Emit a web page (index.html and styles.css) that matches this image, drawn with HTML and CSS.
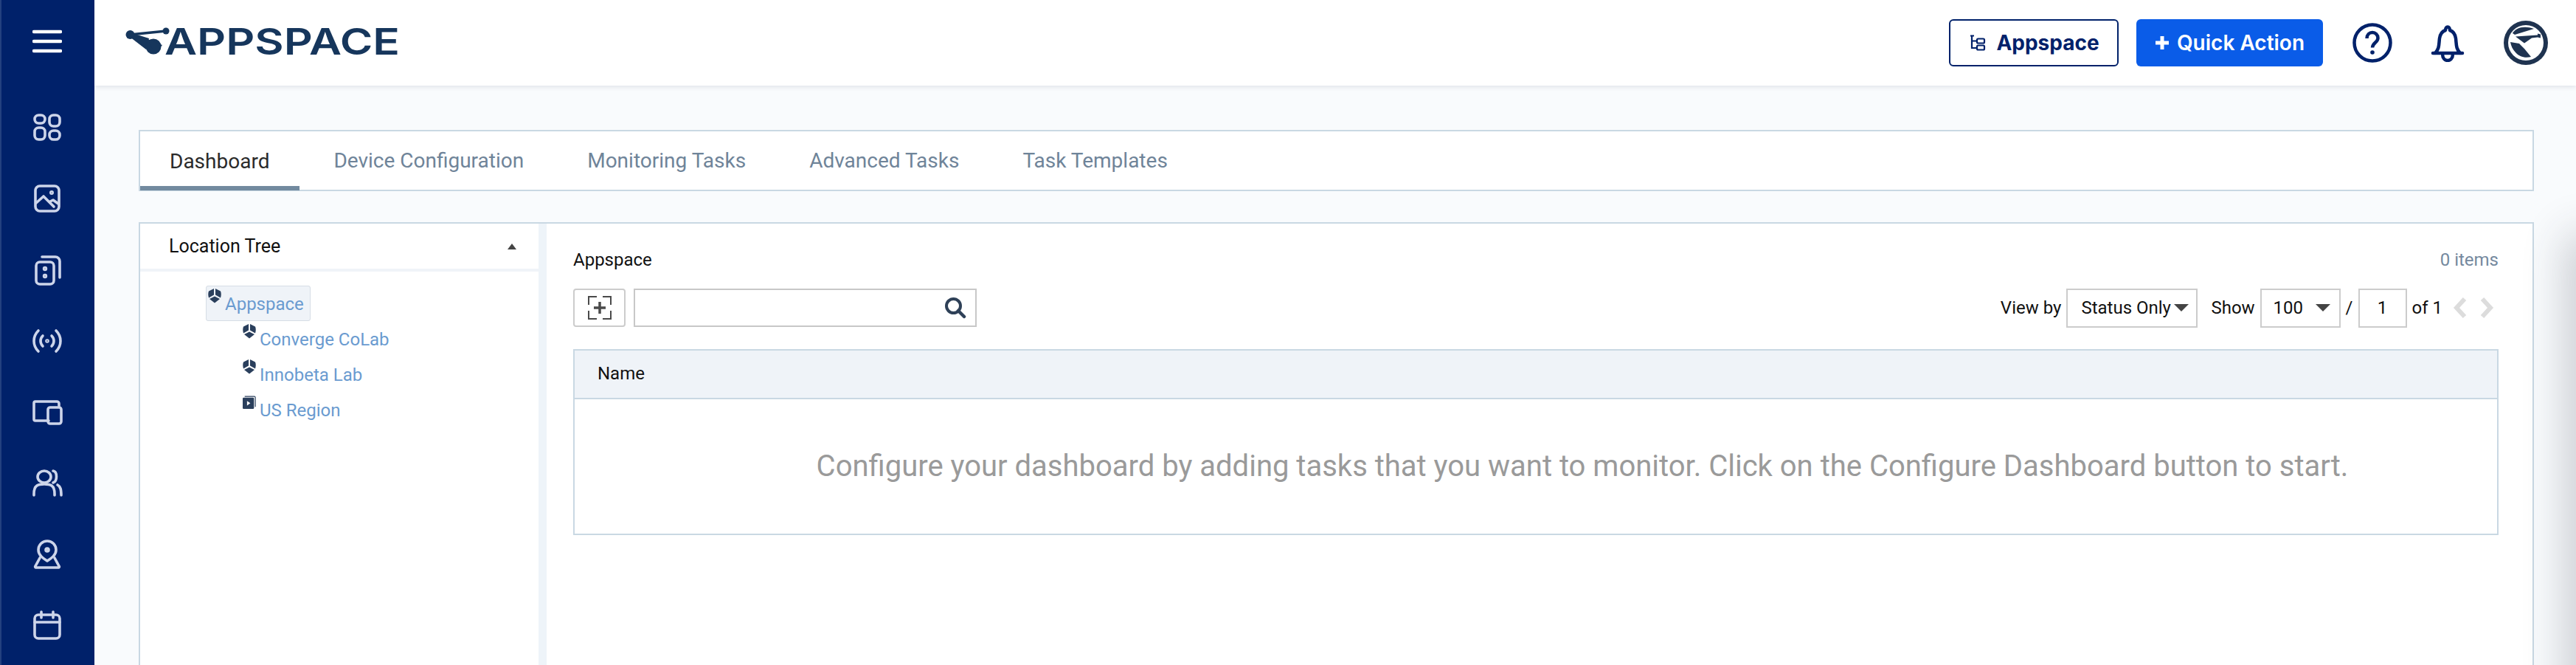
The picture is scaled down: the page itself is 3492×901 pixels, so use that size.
FILE: index.html
```html
<!DOCTYPE html>
<html>
<head>
<meta http-equiv="Content-Type" content="text/html; charset=utf-8">
<title>Appspace</title>
<link rel="stylesheet" href="styles.css">
</head>
<body>
<div class="app">
    <nav class="side">
        <a class="side_burger" href="javascript:;">
            <svg width="40" height="32" viewBox="0 0 40 32"><path d="M2 3h36M2 16h36M2 29h36" stroke="#fff" stroke-width="4.5" stroke-linecap="round"/></svg>
        </a>
        <ul class="side_menu">
            <li><svg viewBox="0 0 24 24"><rect x="3.5" y="3.5" width="7" height="5.5" rx="2.7"/><rect x="13.500" y="3.500" width="7" height="7.500" rx="2.700"/><rect x="3.500" y="12" width="7" height="8" rx="2.700"/><rect x="13.500" y="14" width="7" height="6" rx="2.800"/></svg></li>
            <li><svg viewBox="0 0 24 24"><rect x="4" y="3.500" width="16" height="17" rx="3"/><circle cx="15" cy="8" r=".6"/><path d="M4.500 15l5-4.500 5 5 2 2M14 14l2-1 3.500 2.500"/></svg></li>
            <li><svg viewBox="0 0 24 24"><rect x="4.500" y="6.500" width="12" height="15" rx="2.500"/><path d="M8.500 3h9a3 3 0 0 1 3 3v11"/><circle cx="10.500" cy="11" r=".7"/><circle cx="10.500" cy="16" r=".7"/></svg></li>
            <li><svg viewBox="0 0 24 24"><path d="M6 5c-4 4-4 10 0 14M18 5c4 4 4 10 0 14M9 8.500c-2 2-2 5 0 7M15 8.500c2 2 2 5 0 7"/><circle cx="12" cy="12" r=".5"/></svg></li>
            <li><svg viewBox="0 0 24 24"><path d="M13 18H4a1 1 0 0 1-1-1V6a1 1 0 0 1 1-1h14.500a1.500 1.500 0 0 1 1.500 1.500V8"/><rect x="12.500" y="9" width="9" height="11" rx="1.500"/></svg></li>
            <li><svg viewBox="0 0 24 24"><ellipse cx="10" cy="7.500" rx="4.500" ry="4"/><path d="M3 20v-1c0-6 3-6.500 7-6.500s7 .5 7 6.500v1M16 3.500c3 .5 3 7 0 8M19 13c2 1 2.500 3 2.500 7"/></svg></li>
            <li><svg viewBox="0 0 24 24"><path d="M12 16.500c-3-2-6-4-6-7.500a6 6 0 0 1 12 0c0 3.500-3 5.500-6 7.500z"/><circle cx="12" cy="9" r="1"/><path d="M7 14.500l-3 5.500a.6.6 0 0 0 .5 1h15a.6.6 0 0 0 .5-1l-3-5.500"/></svg></li>
            <li><svg viewBox="0 0 24 24"><rect x="3.500" y="5" width="17" height="16" rx="2.500"/><path d="M3.500 10h17M8 3v4M16 3v4"/></svg></li>
        </ul>
    </nav>

    <div class="main">
        <header class="top">
            <a class="logo" href="javascript:;">
                <svg width="372" height="64" viewBox="0 -12 372 64">
                    <path d="M6 11L55 6" stroke="#16365c" stroke-width="3.500"/>
                    <path d="M6 8L32 16 28 31 6 14z" fill="#16365c"/>
                    <circle cx="6.500" cy="11" r="6" fill="#16365c"/>
                    <circle cx="55" cy="6" r="4.500" fill="#16365c"/>
                    <circle cx="38" cy="27" r="10.500" fill="#16365c"/>
                    <path d="M30 17l20 8-10 12z" fill="#16365c"/>
                    <text class="logo_text" x="53" y="38" textLength="319" lengthAdjust="spacingAndGlyphs">APPSPACE</text>
                </svg>
            </a>
            <div class="top_right">
                <a class="btn_org" href="javascript:;">
                    <svg width="24" height="24" viewBox="0 0 24 24"><path d="M3 2.500h5M5 3v16h6M5 9.500h6" fill="none" stroke="#00216a" stroke-width="2.200"/><rect x="12" y="6.500" width="10" height="6" rx="1.500" fill="none" stroke="#00216a" stroke-width="2.200"/><rect x="12" y="15.500" width="10" height="6" rx="1.500" fill="none" stroke="#00216a" stroke-width="2.200"/></svg>
                    Appspace
                </a>
                <a class="btn_quick" href="javascript:;">
                    <svg width="20" height="20" viewBox="0 0 20 20"><path d="M10 1v18M1 10h18" stroke="#fff" stroke-width="5"/></svg>
                    Quick Action
                </a>
                <a class="top_icon" href="javascript:;">
                    <svg width="54" height="54" viewBox="0 0 54 54"><circle cx="27" cy="27" r="24.500" fill="none" stroke="#00216a" stroke-width="4.500"/><path d="M19.500 21c0-5 3.500-8 7.500-8s7.500 3 7.500 7.500c0 6-7.500 6.500-7.500 13" fill="none" stroke="#00216a" stroke-width="4.500"/><circle cx="27" cy="40" r="2.800" fill="#00216a"/></svg>
                </a>
                <a class="top_icon" href="javascript:;">
                    <svg width="46" height="52" viewBox="0 0 46 52"><path d="M3 40h40M6 40c6-6 5-12 6-20 1-7 5-10 8-11 0-6 6-6 6 0 3 1 7 4 8 11 1 8 0 14 6 20M16 41c0 12 14 12 14 0" fill="none" stroke="#00216a" stroke-width="4.500" stroke-linecap="round" stroke-linejoin="round"/></svg>
                </a>
                <a class="avatar" href="javascript:;">
                    <svg width="60" height="60" viewBox="0 0 60 60"><circle cx="30" cy="30" r="30" fill="#1f3350"/><circle cx="30" cy="30" r="24" fill="#fff"/><path d="M12 17C16 10 27 6 41 11L15 19z" fill="#1f3350"/><path d="M16 21.500l30-2v-2l4 1v5l-4-1-8 1-10 7z" fill="#1f3350"/><path d="M9 29l12 2 7 7 9 11c-8 2-16 0-21-6-4-4-6-9-7-14z" fill="#1f3350"/></svg>
                </a>
            </div>
        </header>

        <div class="content">
            <ul class="tabs">
                <li class="active">Dashboard</li>
                <li>Device Configuration</li>
                <li>Monitoring Tasks</li>
                <li>Advanced Tasks</li>
                <li>Task Templates</li>
            </ul>

            <div class="panel">
                <div class="tree">
                    <div class="tree_head">
                        <span>Location Tree</span>
                        <i class="arrow_up"></i>
                    </div>
                    <ul class="tree_list">
                        <li class="tree_node selected">
                            <svg class="ico_org" viewBox="0 0 18 20"><path d="M8 0v8.500L1 12.500C0 9 0 6 1 3.500zM10 0v8.500l7 4c1-3.500 1-6.500 0-9zM9 10.500l7 3.500-7 5.500-7-5.500z"/></svg>
                            <a href="javascript:;">Appspace</a>
                        </li>
                        <li class="tree_node child">
                            <svg class="ico_org" viewBox="0 0 18 20"><path d="M8 0v8.500L1 12.500C0 9 0 6 1 3.500zM10 0v8.500l7 4c1-3.500 1-6.500 0-9zM9 10.500l7 3.500-7 5.500-7-5.500z"/></svg>
                            <a href="javascript:;">Converge CoLab</a>
                        </li>
                        <li class="tree_node child">
                            <svg class="ico_org" viewBox="0 0 18 20"><path d="M8 0v8.500L1 12.500C0 9 0 6 1 3.500zM10 0v8.500l7 4c1-3.500 1-6.500 0-9zM9 10.500l7 3.500-7 5.500-7-5.500z"/></svg>
                            <a href="javascript:;">Innobeta Lab</a>
                        </li>
                        <li class="tree_node child">
                            <svg class="ico_org" viewBox="0 0 20 20"><rect x="0" y="3" width="17" height="17" rx="1.500" fill="#2a3f5c"/><path d="M3 1.200h14.500a1.500 1.500 0 0 1 1.500 1.500V17" fill="none" stroke="#2a3f5c" stroke-width="1.300"/><path d="M6.500 8l5 3.500-5 3.500z" fill="#fff"/></svg>
                            <a href="javascript:;">US Region</a>
                        </li>
                    </ul>
                </div>
                <div class="split"></div>
                <div class="detail">
                    <div class="detail_head">
                        <span>Appspace</span>
                        <span class="count">0 items</span>
                    </div>
                    <div class="toolbar">
                        <a class="btn_add" href="javascript:;">
                            <svg width="32" height="32" viewBox="0 0 32 32"><path d="M12 1H1v11M20 1h11v11M12 31H1V20M20 31h11V20" fill="none" stroke="#4a4a4a" stroke-width="2"/><path d="M16 8v16M8 16h16" stroke="#4a4a4a" stroke-width="3.500"/></svg>
                        </a>
                        <div class="search">
                            <svg width="30" height="30" viewBox="0 0 30 30"><circle cx="12.500" cy="12.500" r="9.500" fill="none" stroke="#2e4057" stroke-width="4"/><path d="M19 19l8 8" stroke="#2e4057" stroke-width="4.500" stroke-linecap="round"/></svg>
                        </div>
                        <div class="pager">
                            <span class="pager_txt">View by</span>
                            <div class="select sel_view">Status Only<i class="arrow_down"></i></div>
                            <span class="pager_txt show">Show</span>
                            <div class="select sel_show">100<i class="arrow_down"></i></div>
                            <span class="pager_txt">/</span>
                            <div class="page_input">1</div>
                            <span class="pager_txt">of 1</span>
                            <svg class="chev" width="20" height="30" viewBox="0 0 20 30"><path d="M16 3L5 15l11 12" fill="none" stroke="#dcdcdc" stroke-width="6"/></svg>
                            <svg class="chev" width="20" height="30" viewBox="0 0 20 30"><path d="M4 3l11 12L4 27" fill="none" stroke="#dcdcdc" stroke-width="6"/></svg>
                        </div>
                    </div>
                    <div class="table">
                        <div class="table_head">Name</div>
                        <div class="table_empty">Configure your dashboard by adding tasks that you want to monitor. Click on the Configure Dashboard button to start.</div>
                    </div>
                </div>
            </div>
        </div>
    </div>
</div>
<div class="drawer_shadow"></div>
</body>
</html>
```

FILE: styles.css
```css
*{ margin: 0; padding: 0; list-style: none; box-sizing: border-box;}
html, body{ height: 100%; overflow: hidden;}
body{ font-family: Roboto, "Liberation Sans", sans-serif; font-size: 24px; color: #111; background: #f9fbfd;}
a{ text-decoration: none; color: inherit;}

.app{ display: flex; height: 901px;}

/* left nav */
.side{ flex: 0 0 128px; background: #00216a; border-left: 2px solid #23407f;}
.side_burger{ display: flex; justify-content: center; height: 116px; padding-top: 40px; padding-right: 2px;}
.side_menu{ padding-right: 2px; padding-top: 9px;}
.side_menu li{ display: flex; justify-content: center; align-items: center; height: 96.3px;}
.side_menu svg{ width: 48px; height: 48px; fill: none; stroke: #cdd5ea; stroke-width: 1.8; stroke-linecap: round; stroke-linejoin: round;}

.main{ flex: 1; display: flex; flex-direction: column; min-width: 0;}

/* header */
.top{ display: flex; justify-content: space-between; align-items: center; flex: 0 0 116px; padding: 0 38px 0 42px; background: #fff; box-shadow: 0 2px 6px rgba(40,60,90,.12); position: relative;}
.logo{ display: block; height: 64px; margin-bottom: 4px;}
.logo_text{ font-family: Inter, sans-serif; font-size: 50px; font-weight: 600; fill: #16365c;}
.top_right{ display: flex; align-items: center;}
.btn_org, .btn_quick{ display: flex; align-items: center; justify-content: center; height: 64px; border-radius: 6px; font-family: Inter, sans-serif; font-size: 28px;}
.btn_org{ width: 230px; gap: 14px; border: 2.5px solid #00216a; color: #00216a; font-weight: 700;}
.btn_quick{ width: 253px; gap: 10px; margin-left: 24px; background: #0a5ce8; color: #fff; font-weight: 600;}
.top_icon{ display: flex;}
.top_icon:nth-child(3){ margin-left: 40px;}
.top_icon:nth-child(4){ margin-left: 52px;}
.avatar{ display: flex; margin-left: 53px;}

.content{ flex: 1; display: flex; flex-direction: column; padding: 60px 57px 0 60px; min-height: 0;}

/* tabs */
.tabs{ display: flex; height: 83px; background: #fff; border: 2px solid #c9d8e3;}
.tabs li{ display: flex; align-items: center; padding: 0 43px; font-size: 28px; color: #6f8499;}
.tabs .active{ color: #2b2b2b; border-bottom: 6px solid #728a9f; padding: 6px 41px 0 40px; margin: 0 3px -1px 0;}

/* panel */
.panel{ flex: 1; display: flex; margin-top: 42px; background: #fff; border: 2px solid #c9d8e3; border-bottom: 0; min-height: 0;}
.tree{ flex: 0 0 540px;}
.tree_head{ display: flex; justify-content: space-between; align-items: center; height: 65px; padding: 0 30px 0 39px; border-bottom: 4px solid #f0f4f8; font-size: 25px;}
.arrow_up{ width: 0; height: 0; border-left: 6px solid transparent; border-right: 6px solid transparent; border-bottom: 8px solid #444;}
.tree_list{ padding: 19px 0 0 89px;}
.tree_node{ display: flex; width: max-content; height: 48px; color: #6a9bd0;}
.tree_node a{ padding-top: 8px; margin-left: 5px; line-height: 30px;}
.ico_org{ flex: none; width: 18px; height: 20px; margin-top: 2px; fill: #2a3f5c;}
.selected{ margin-bottom: 2px; padding: 1px 8px 0 2px; background: #eff3f8; border: 1px solid #d6dde5; border-radius: 3px;}
.selected a{ padding-top: 8px;}
.child{ margin-left: 50px;}
.split{ flex: 0 0 11px; background: #eef4f9;}

/* right side */
.detail{ flex: 1; padding: 0 46px 0 36px; min-width: 0;}
.detail_head{ display: flex; justify-content: space-between; align-items: center; height: 88px; padding-top: 10px;}
.count{ color: #75899e;}
.toolbar{ display: flex; align-items: center; height: 52px;}
.btn_add{ display: flex; justify-content: center; align-items: center; width: 71px; height: 52px; background: #fff; border: 2px solid #ccc; border-radius: 4px;}
.search{ display: flex; justify-content: flex-end; align-items: center; width: 465px; height: 52px; margin-left: 11px; padding-right: 12px; border: 2px solid #c8c8c8;}
.pager{ display: flex; align-items: center; margin-left: auto;}
.pager_txt{ margin: 0 7px;}
.pager .show{ margin-left: 18px;}
.select{ display: flex; align-items: center; justify-content: space-between; height: 53px; border: 2px solid #ccc;}
.sel_view{ width: 178px; padding: 0 10px 0 18px;}
.sel_show{ width: 109px; padding: 0 12px 0 16px;}
.arrow_down{ width: 0; height: 0; border-left: 10px solid transparent; border-right: 10px solid transparent; border-top: 10px solid #444;}
.page_input{ width: 66px; height: 53px; line-height: 49px; text-align: center; border: 2px solid #ccc;}
.chev{ margin-left: 16px;}
.pager_txt + .chev{ margin-left: 7px;}
.chev:last-child{ margin-right: 6px;}

.table{ margin-top: 30px; height: 252px; border: 2px solid #c9d8e3;}
.table_head{ height: 66px; line-height: 62px; padding-left: 31px; background: #eff3f8; border-bottom: 2px solid #c9d8e3;}
.table_empty{ padding: 67px 0 0 126px; text-align: center; font-size: 40px; color: #9a9a9a; white-space: nowrap;}

/* shadow of the closed drawer past the right edge */
.drawer_shadow{ position: fixed; top: 330px; right: -40px; width: 40px; height: 900px; box-shadow: 0 0 60px 12px rgba(40,45,60,.24);}
```
